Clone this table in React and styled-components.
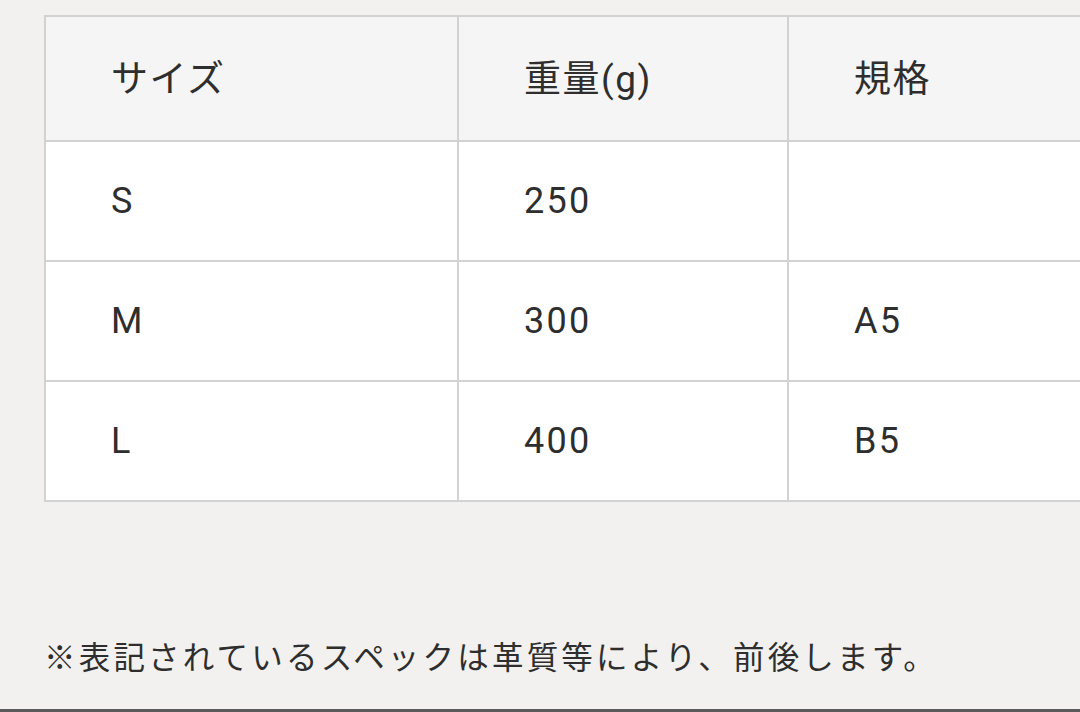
import styled, { createGlobalStyle } from 'styled-components';

const GlobalStyle = createGlobalStyle`
  html, body {
    margin: 0;
    padding: 0;
    background: #f2f1ef;
    overflow: hidden;
  }
  body {
    font-family: Roboto, "Noto Sans CJK JP", sans-serif;
    color: #333;
  }
`;

const Page = styled.div`
  box-sizing: border-box;
  height: 712px;
  padding: 15px 0 0 44px;
  border-bottom: 3px solid #5a5a5a;
  overflow: hidden;
`;

const SpecTable = styled.table`
  border-collapse: collapse;
  table-layout: fixed;
  width: 1100px;
  background: #fff;
`;

const Cell = styled.td`
  border: 2px solid #d2d2d2;
  padding: ${({ $head }) => ($head ? '0 0 6px 65px' : '0 0 0 65px')};
  height: ${({ $head }) => ($head ? '117px' : '118px')};
  background: ${({ $head }) => ($head ? '#f5f5f5' : '#fff')};
  font-size: ${({ $head }) => ($head ? '37px' : '36px')};
  letter-spacing: ${({ $head }) => ($head ? '1.5px' : '2.3px')};
  font-weight: 400;
  text-align: left;
  vertical-align: middle;
  color: #2e2e2e;
`;

const Note = styled.p`
  margin: 133px 0 0;
  font-size: 31.5px;
  letter-spacing: 3.2px;
  line-height: 48px;
  color: #2e2e2e;
  white-space: nowrap;
`;

const rows = [
  { size: 'S', weight: '250', spec: '' },
  { size: 'M', weight: '300', spec: 'A5' },
  { size: 'L', weight: '400', spec: 'B5' },
];

export default function App() {
  return (
    <>
      <GlobalStyle />
      <Page>
        <SpecTable>
          <colgroup>
            <col style={{ width: 413 }} />
            <col style={{ width: 330 }} />
            <col />
          </colgroup>
          <thead>
            <tr>
              <Cell as="th" $head>サイズ</Cell>
              <Cell as="th" $head>重量(g)</Cell>
              <Cell as="th" $head>規格</Cell>
            </tr>
          </thead>
          <tbody>
            {rows.map((r) => (
              <tr key={r.size}>
                <Cell>{r.size}</Cell>
                <Cell>{r.weight}</Cell>
                <Cell>{r.spec}</Cell>
              </tr>
            ))}
          </tbody>
        </SpecTable>
        <Note>※表記されているスペックは革質等により、前後します。</Note>
      </Page>
    </>
  );
}
